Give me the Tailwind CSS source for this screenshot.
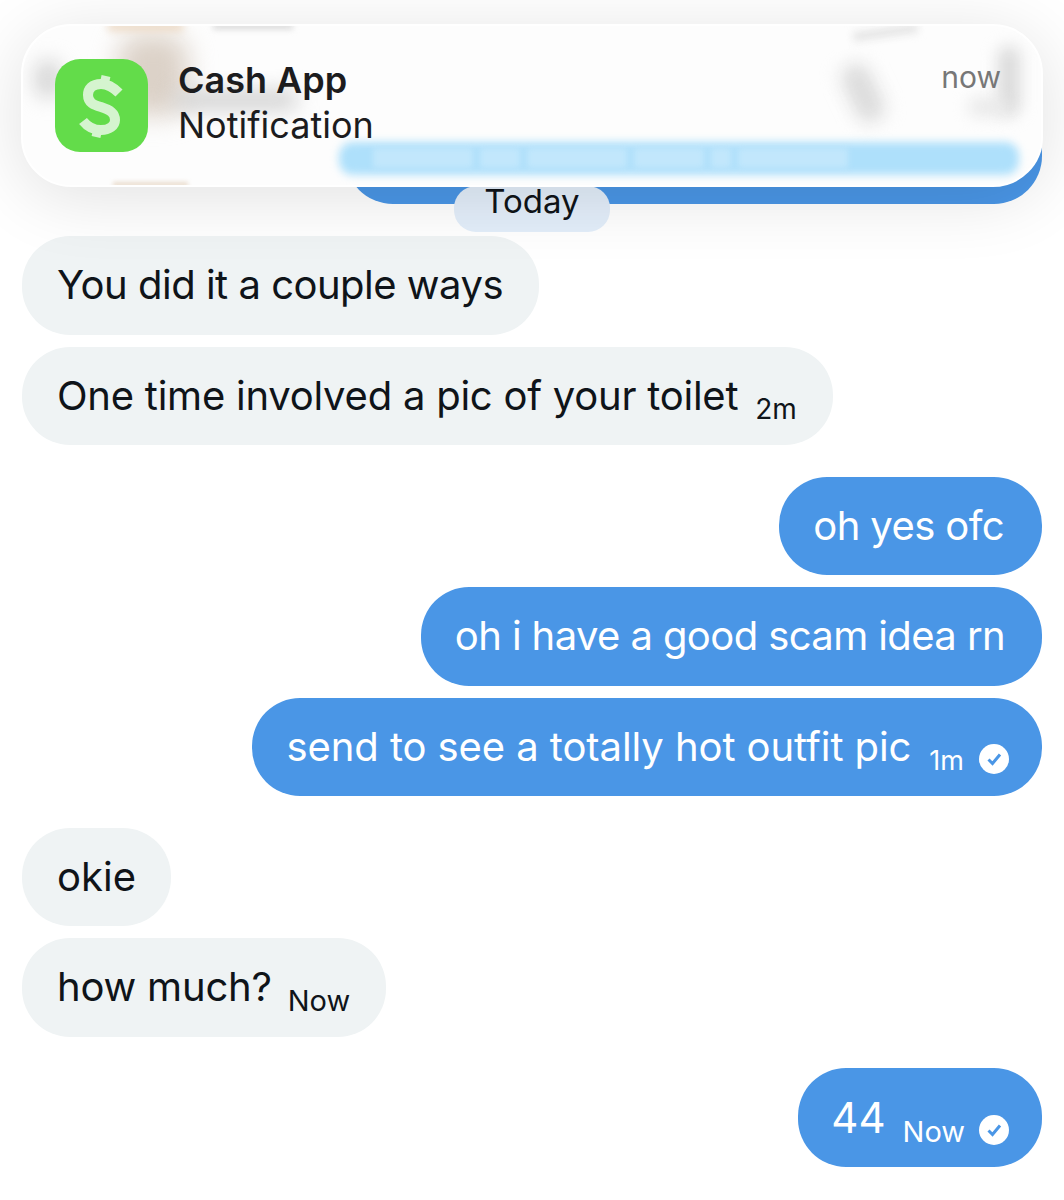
<!DOCTYPE html>
<html lang="en">

<head>
    <meta charset="UTF-8">
    <meta name="viewport" content="width=device-width, initial-scale=1.0">
    <title>Messages</title>
    <script src="https://cdn.jsdelivr.net/npm/@tailwindcss/browser@4"></script>
</head>

<body class="bg-white">
    <div class="relative h-[1200px] w-[1064px] overflow-hidden bg-white font-['Inter',sans-serif] text-[40px] text-[#0f1419]">

        <!-- Messages -->
        <div class="flex flex-col px-[22px] pt-[105px]">
            <div class="ml-[323px] h-[99px] rounded-[48px] bg-[#4a96e6]"></div>
            <div class="z-10 -mt-[18px] flex h-[46px] w-[156px] items-end justify-center self-center rounded-[22px] bg-[#e3eefa] pb-[14px] text-[33px] leading-none">Today</div>

            <div class="mt-[4px] flex flex-col items-start gap-[12px]">
                <div class="flex h-[98.5px] items-center rounded-[48px] bg-[#eff3f4] pl-[35px] pr-[36px] tracking-[-0.5px]">You did it a couple ways</div>
                <div class="flex h-[98.5px] items-center rounded-[48px] bg-[#eff3f4] pl-[35px] pr-[36px] tracking-[-0.24px]">One time involved a pic of your toilet<span class="ml-[17px] mt-[26px] text-[28px] tracking-normal">2m</span></div>
            </div>

            <div class="mt-[31.5px] flex flex-col items-end gap-[12px] text-white">
                <div class="flex h-[98.5px] items-center rounded-[48px] bg-[#4a96e6] pl-[34px] pr-[38px] tracking-[-0.6px]">oh yes ofc</div>
                <div class="flex h-[98.5px] items-center rounded-[48px] bg-[#4a96e6] pl-[34px] pr-[37px] tracking-[-0.6px]">oh i have a good scam idea rn</div>
                <div class="flex h-[98.5px] items-center rounded-[48px] bg-[#4a96e6] pl-[34px] pr-[33px] tracking-[-0.08px]">send to see a totally hot outfit pic<span class="ml-[18px] mt-[28px] text-[27px] tracking-normal">1m</span>
                    <svg class="ml-[15px] mt-[24px] h-[30px] w-[30px]" viewBox="0 0 30 30">
                        <circle cx="15" cy="15" r="15" fill="#fff" />
                        <path d="M9.5 15.5l4 4 7.5-9" fill="none" stroke="#4a96e6" stroke-width="3" />
                    </svg>
                </div>
            </div>

            <div class="mt-[31.5px] flex flex-col items-start gap-[12px]">
                <div class="flex h-[98.5px] items-center rounded-[48px] bg-[#eff3f4] pl-[35px] pr-[35px]">okie</div>
                <div class="flex h-[98.5px] items-center rounded-[48px] bg-[#eff3f4] pl-[35px] pr-[36px] tracking-[-0.2px]">how much?<span class="ml-[16px] mt-[26px] text-[29px] tracking-normal">Now</span></div>
            </div>

            <div class="mt-[31.5px] flex flex-col items-end text-white">
                <div class="flex h-[98.5px] items-center rounded-[48px] bg-[#4a96e6] pl-[33px] pr-[33px]"><span class="text-[42px]">44</span><span class="ml-[17px] mt-[28px] text-[29px] tracking-normal">Now</span>
                    <svg class="ml-[14px] mt-[26px] h-[30px] w-[30px]" viewBox="0 0 30 30">
                        <circle cx="15" cy="15" r="15" fill="#fff" />
                        <path d="M9.5 15.5l4 4 7.5-9" fill="none" stroke="#4a96e6" stroke-width="3" />
                    </svg>
                </div>
            </div>
        </div>

        <!-- Notification banner -->
        <div class="absolute left-[21px] top-[24px] z-20 flex h-[163px] w-[1022px] items-start overflow-hidden rounded-[50px] border-2 border-white bg-[#fdfdfd] shadow-[0_10px_70px_rgba(0,0,0,0.12)]">
            <!-- what shows through the glass -->
            <div class="absolute left-[12px] top-[34px] h-[38px] w-[26px] rounded-full bg-[#d4d4d4] blur-[10px]"></div>
            <div class="absolute left-[95px] top-[8px] h-[82px] w-[70px] rounded-[24px] bg-[#dcd2c8] blur-[13px]"></div>
            <div class="absolute left-[150px] top-[64px] h-[20px] w-[125px] rounded-full bg-[#d2d2d2] blur-[10px]"></div>
            <div class="absolute -top-[4px] left-[85px] h-[9px] w-[75px] bg-[#ecd9c4] blur-[4px]"></div>
            <div class="absolute -top-[3px] left-[190px] h-[6px] w-[80px] bg-[#d6d6d6] blur-[3px]"></div>
            <div class="absolute -bottom-[2px] left-[90px] h-[5px] w-[75px] bg-[#e9dccd] blur-[2px]"></div>
            <div class="absolute left-[825px] top-[36px] h-[62px] w-[30px] rotate-[-25deg] rounded-full bg-[#dcdcdc] blur-[9px]"></div>
            <div class="absolute left-[830px] top-[2px] h-[9px] w-[65px] rotate-[-8deg] bg-[#e4e4e4] blur-[4px]"></div>
            <div class="absolute left-[975px] top-[20px] h-[70px] w-[22px] rounded-full bg-[#dadada] blur-[8px]"></div>
            <div class="absolute left-[945px] top-[72px] h-[18px] w-[40px] rounded-full bg-[#e8e8e8] blur-[8px]"></div>
            <div class="absolute left-[316px] top-[116px] h-[33px] w-[680px] rounded-[14px] bg-[#aee0fb] blur-[4px]"></div>
            <div class="absolute left-[350px] top-[122px] flex h-[20px] w-[505px] gap-[7px] blur-[3px]">
                <div class="w-[100px] bg-[#c2e7fc]"></div>
                <div class="w-[40px] bg-[#c2e7fc]"></div>
                <div class="w-[100px] bg-[#c2e7fc]"></div>
                <div class="w-[70px] bg-[#c2e7fc]"></div>
                <div class="w-[20px] bg-[#c2e7fc]"></div>
                <div class="w-[110px] bg-[#c2e7fc]"></div>
            </div>

            <div class="relative z-10 ml-[32px] mt-[33px] h-[93px] w-[93px] shrink-0 overflow-hidden rounded-[25px] bg-[#63dc4a]">
                <svg class="h-full w-full" viewBox="0 0 93 93">
                    <path d="M64 34C58 28 52 25 46 25C37 25 33 30 33 36C33 44 39 46 46 48C55 51 60 54 60 61C60 67 54 71 46 71C38 71 32 67 28 62" fill="none" stroke="#d5f4cf" stroke-width="10" />
                    <path d="M51 17l-2 9M43 69l-2 9" fill="none" stroke="#d5f4cf" stroke-width="9" />
                </svg>
            </div>
            <div class="relative z-10 ml-[30px] mt-[32px] flex flex-col text-[36px] leading-[45px] text-[#1c1c1e]">
                <span class="font-semibold">Cash App</span>
                <span>Notification</span>
            </div>
            <span class="absolute right-[40px] top-[31px] z-10 text-[30px] leading-[40px] text-[#777777]">now</span>
        </div>
    </div>
</body>

</html>
